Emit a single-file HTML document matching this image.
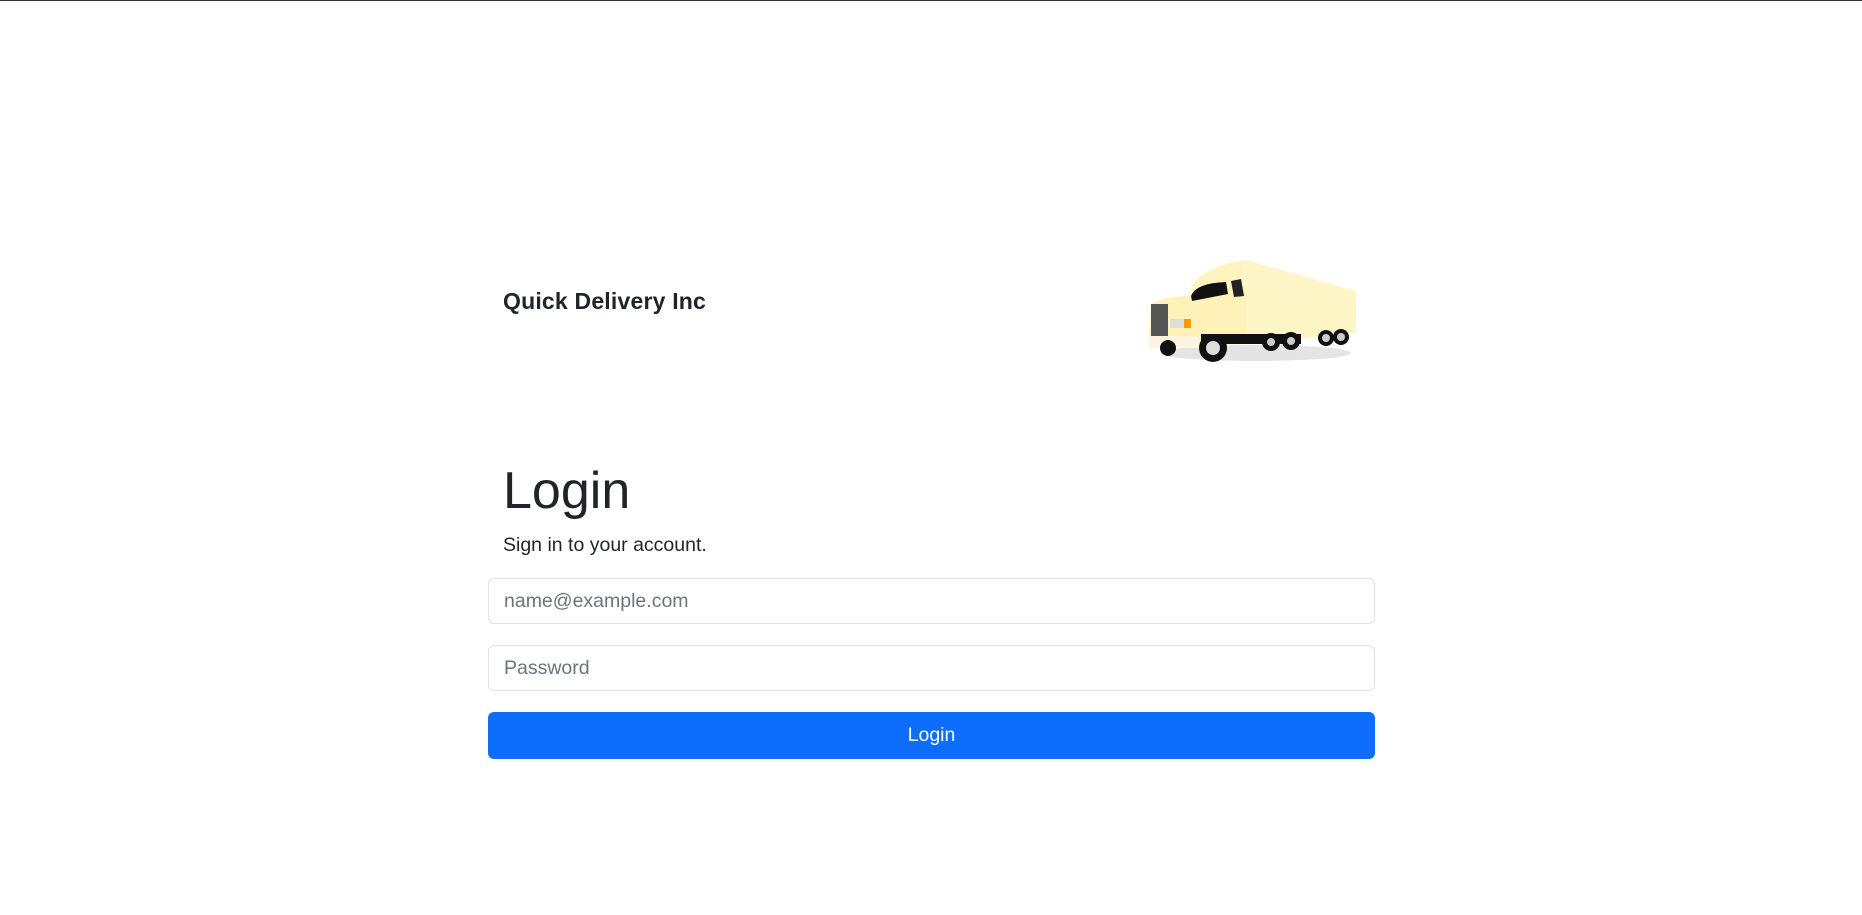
<!DOCTYPE html>
<html><head><meta charset="utf-8"><style>
html,body{margin:0;padding:0;background:#fff;}
body{width:1862px;height:915px;border-top:1px solid #333;box-sizing:border-box;position:relative;font-family:"Liberation Sans",sans-serif;color:#212529;overflow:hidden;}
.brand{position:absolute;left:503px;top:287px;font-size:23px;font-weight:bold;letter-spacing:0.2px;}
h1{position:absolute;left:503px;top:457px;margin:0;font-size:52px;font-weight:500;line-height:66px;}
.sub{position:absolute;left:503px;top:533px;font-size:19.5px;}
.in{position:absolute;left:488px;width:887px;height:46px;border:1px solid #dee2e6;border-radius:6px;box-sizing:border-box;font-size:19.5px;color:#6c757d;padding-left:15px;line-height:45px;}
.btn{position:absolute;left:488px;top:711px;width:887px;height:47px;background:#0d6efd;border-radius:6px;color:#fff;font-size:19.5px;text-align:center;line-height:47px;}
svg{position:absolute;left:1146px;top:255px;}
</style></head><body>
<div class="brand">Quick Delivery Inc</div>
<svg width="212" height="112" viewBox="0 0 212 112">
<ellipse cx="110" cy="97" rx="95" ry="8" fill="#e4e4e4"/>
<path d="M95 5 L100 4 L210 35 L210 77 L100 88 Z" fill="#fff6c8"/>
<path d="M45 30 Q60 10 95 5 L100 88 L55 90 Z" fill="#fff4c0"/>
<path d="M5 48 Q20 40 45 40 L60 30 L100 30 L100 85 L10 92 L3 80 Z" fill="#fff2b8"/>
<path d="M45 40 Q50 27 80 26 L82 38 L46 45 Z" fill="#111"/>
<path d="M85 25 L95 23 L98 40 L88 41 Z" fill="#222"/>
<rect x="5" y="48" width="17" height="33" fill="#555"/>
<rect x="24" y="63" width="21" height="9" fill="#ddd"/><rect x="38" y="63" width="7" height="9" fill="#f90"/>
<rect x="3" y="80" width="50" height="12" fill="#fdf5e0"/>
<rect x="55" y="78" width="100" height="10" fill="#111"/>
<circle cx="67" cy="92" r="14" fill="#111"/><circle cx="67" cy="92" r="7" fill="#ddd"/>
<circle cx="22" cy="92" r="8" fill="#111"/>
<circle cx="125" cy="86" r="9" fill="#111"/><circle cx="125" cy="86" r="4" fill="#ccc"/>
<circle cx="145" cy="85" r="9" fill="#111"/><circle cx="145" cy="85" r="4" fill="#ccc"/>
<circle cx="180" cy="82" r="8" fill="#111"/><circle cx="180" cy="82" r="4" fill="#ccc"/>
<circle cx="195" cy="81" r="8" fill="#111"/><circle cx="195" cy="81" r="4" fill="#ccc"/>
</svg>
<h1>Login</h1>
<div class="sub">Sign in to your account.</div>
<div class="in" style="top:577px">name@example.com</div>
<div class="in" style="top:644px">Password</div>
<div class="btn">Login</div>
</body></html>
